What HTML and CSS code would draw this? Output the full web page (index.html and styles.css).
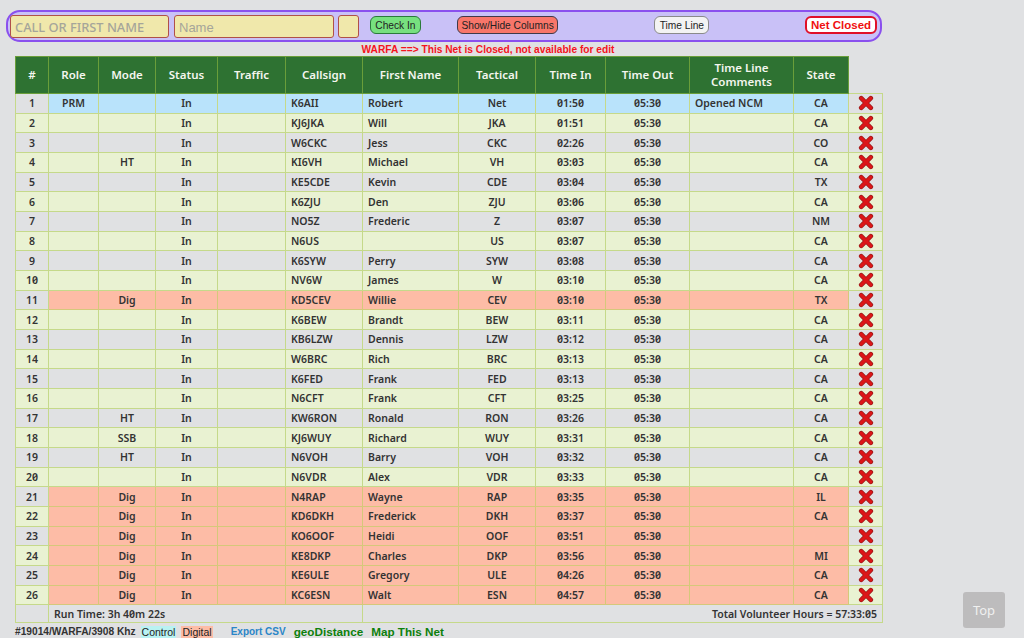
FILE: index.html
```html
<!DOCTYPE html>
<html lang="en">
<head>
    <meta charset="UTF-8">
    <title>Net Control</title>
    <link rel="stylesheet" href="styles.css">
</head>
<body>
    <svg class="defs" width="0" height="0">
        <symbol id="del" viewBox="0 0 16 16">
            <path d="M3.2 3.2L12.8 12.8M12.8 3.2L3.2 12.8" stroke="#9a1a1a" stroke-width="4.6" stroke-linecap="round" fill="none"/>
            <path d="M3.2 3.2L12.8 12.8M12.8 3.2L3.2 12.8" stroke="#dc1618" stroke-width="3.2" stroke-linecap="round" fill="none"/>
        </symbol>
    </svg>

    <div class="top-bar">
        <input class="field call" placeholder="CALL OR FIRST NAME">
        <input class="field name" placeholder="Name">
        <input class="field tiny">
        <button class="btn check">Check In</button>
        <button class="btn cols">Show/Hide Columns</button>
        <button class="btn line">Time Line</button>
        <button class="btn closed">Net Closed</button>
    </div>
    <p class="notice">WARFA ==&gt; This Net is Closed, not available for edit</p>

    <table class="net">
        <colgroup>
            <col class="c1"><col class="c2"><col class="c3"><col class="c4"><col class="c5"><col class="c6"><col class="c7">
            <col class="c8"><col class="c9"><col class="c10"><col class="c11"><col class="c12"><col class="c13">
        </colgroup>
        <thead>
            <tr>
                <th>#</th><th>Role</th><th>Mode</th><th>Status</th><th>Traffic</th><th>Callsign</th><th>First Name</th>
                <th>Tactical</th><th>Time In</th><th>Time Out</th><th>Time Line<br>Comments</th><th>State</th><th class="blank"></th>
            </tr>
        </thead>
        <tbody id="rows"></tbody>
        <tfoot>
            <tr>
                <td></td>
                <td colspan="5" class="left run">Run Time: 3h 40m 22s</td>
                <td colspan="7" class="right">Total Volunteer Hours = 57:33:05</td>
            </tr>
        </tfoot>
    </table>

    <div class="foot-line">
        <span class="net-id">#19014/WARFA/3908 Khz</span>
        <span class="key control">Control</span>
        <span class="key digital">Digital</span>
        <a class="export">Export CSV</a>
        <a class="geo">geoDistance</a>
        <a class="map">Map This Net</a>
    </div>

    <button class="top-btn">Top</button>

    <script>
        // role, mode, callsign, name, tactical, time in, comment, state
        const stations = [
            ['PRM', '', 'K6AII', 'Robert', 'Net', '01:50', 'Opened NCM', 'CA'],
            ['', '', 'KJ6JKA', 'Will', 'JKA', '01:51', '', 'CA'],
            ['', '', 'W6CKC', 'Jess', 'CKC', '02:26', '', 'CO'],
            ['', 'HT', 'KI6VH', 'Michael', 'VH', '03:03', '', 'CA'],
            ['', '', 'KE5CDE', 'Kevin', 'CDE', '03:04', '', 'TX'],
            ['', '', 'K6ZJU', 'Den', 'ZJU', '03:06', '', 'CA'],
            ['', '', 'NO5Z', 'Frederic', 'Z', '03:07', '', 'NM'],
            ['', '', 'N6US', '', 'US', '03:07', '', 'CA'],
            ['', '', 'K6SYW', 'Perry', 'SYW', '03:08', '', 'CA'],
            ['', '', 'NV6W', 'James', 'W', '03:10', '', 'CA'],
            ['', 'Dig', 'KD5CEV', 'Willie', 'CEV', '03:10', '', 'TX'],
            ['', '', 'K6BEW', 'Brandt', 'BEW', '03:11', '', 'CA'],
            ['', '', 'KB6LZW', 'Dennis', 'LZW', '03:12', '', 'CA'],
            ['', '', 'W6BRC', 'Rich', 'BRC', '03:13', '', 'CA'],
            ['', '', 'K6FED', 'Frank', 'FED', '03:13', '', 'CA'],
            ['', '', 'N6CFT', 'Frank', 'CFT', '03:25', '', 'CA'],
            ['', 'HT', 'KW6RON', 'Ronald', 'RON', '03:26', '', 'CA'],
            ['', 'SSB', 'KJ6WUY', 'Richard', 'WUY', '03:31', '', 'CA'],
            ['', 'HT', 'N6VOH', 'Barry', 'VOH', '03:32', '', 'CA'],
            ['', '', 'N6VDR', 'Alex', 'VDR', '03:33', '', 'CA'],
            ['', 'Dig', 'N4RAP', 'Wayne', 'RAP', '03:35', '', 'IL'],
            ['', 'Dig', 'KD6DKH', 'Frederick', 'DKH', '03:37', '', 'CA'],
            ['', 'Dig', 'KO6OOF', 'Heidi', 'OOF', '03:51', '', ''],
            ['', 'Dig', 'KE8DKP', 'Charles', 'DKP', '03:56', '', 'MI'],
            ['', 'Dig', 'KE6ULE', 'Gregory', 'ULE', '04:26', '', 'CA'],
            ['', 'Dig', 'KC6ESN', 'Walt', 'ESN', '04:57', '', 'CA']
        ];

        const rows = document.getElementById('rows');
        stations.forEach((s, i) => {
            const tr = document.createElement('tr');
            let kind = i % 2 ? 'even' : 'odd';
            if (s[0] === 'PRM') kind += ' prm';
            if (s[1] === 'Dig') kind += ' dig';
            tr.className = kind;
            tr.innerHTML =
                '<td class="num">' + (i + 1) + '</td>' +
                '<td>' + s[0] + '</td><td>' + s[1] + '</td><td>In</td><td></td>' +
                '<td class="left">' + s[2] + '</td><td class="left">' + s[3] + '</td>' +
                '<td>' + s[4] + '</td><td>' + s[5] + '</td><td>05:30</td>' +
                '<td class="left">' + s[6] + '</td><td>' + s[7] + '</td>' +
                '<td class="num"><svg class="del"><use href="#del"/></svg></td>';
            rows.appendChild(tr);
        });
    </script>
</body>
</html>
```
FILE: styles.css
```css
body {
    margin: 0;
    height: 638px;
    overflow: hidden;
    background: #e0e1e3;
    font-family: "Noto Sans", sans-serif;
    color: #333;
}

.defs {
    display: block;
    height: 0;
}

.top-bar {
    display: flex;
    align-items: flex-start;
    box-sizing: border-box;
    width: 876px;
    height: 32px;
    margin: 10px 0 0 6px;
    padding: 3px 3px 0 2px;
    background: #c9c1f7;
    border: 2px solid #8a50ee;
    border-radius: 14px;
}

.field {
    box-sizing: border-box;
    height: 23px;
    padding: 1px 4px 0;
    background: #f0e8ab;
    border: 1px solid #b0504a;
    border-radius: 3px;
    font-family: "Noto Sans", sans-serif;
}

.field::placeholder {
    color: #a5a59a;
    opacity: 1;
}

.call {
    width: 159px;
    margin-right: 5px;
    font-size: 12.8px;
    font-weight: 500;
}

.name {
    width: 160px;
    margin-right: 4px;
    font-family: "Liberation Sans", sans-serif;
    font-size: 13px;
}

.tiny {
    width: 21px;
}

.btn {
    height: 18px;
    margin-top: 1px;
    padding: 0;
    border-radius: 6px;
    font-family: "Liberation Sans", sans-serif;
    font-size: 10.2px;
    color: #222;
    white-space: nowrap;
}

.check {
    width: 51px;
    margin-left: 11px;
    background: #77e07f;
    border: 1px solid #2a7a3a;
}

.cols {
    width: 102px;
    margin-left: 36px;
    background: #f8766a;
    border: 1px solid #3f3a4a;
}

.line {
    width: 55px;
    margin-left: 96px;
    background: #f3f3f3;
    border: 1px solid #8a8a8a;
}

.closed {
    width: 72px;
    margin-left: 96px;
    background: #fff;
    border: 2px solid #e0102a;
    color: #f01010;
    font-weight: bold;
    font-size: 11.5px;
}

.notice {
    margin: 1px 0 0;
    width: 976px;
    height: 13px;
    text-align: center;
    font-family: "Liberation Sans", sans-serif;
    font-size: 10.2px;
    line-height: 13px;
    font-weight: bold;
    color: #f5141e;
}

.net {
    table-layout: fixed;
    width: 867px;
    margin-left: 15px;
    border-collapse: collapse;
    font-size: 10.5px;
    font-weight: 600;
    font-feature-settings: "zero";
}

.c1 { width: 33px; }
.c2 { width: 50px; }
.c3 { width: 57px; }
.c4 { width: 62px; }
.c5 { width: 68px; }
.c6 { width: 77px; }
.c7 { width: 96px; }
.c8 { width: 77px; }
.c9 { width: 70px; }
.c10 { width: 84px; }
.c11 { width: 104px; }
.c12 { width: 55px; }
.c13 { width: 34px; }

th {
    height: 36px;
    padding: 0;
    background: #2e7232;
    border: 1px solid #6a9e3a;
    color: #f4f6ee;
    font-size: 11.5px;
    line-height: 14px;
    font-weight: 600;
}

th.blank {
    background: transparent;
    border: none;
}

td {
    height: 18.68px;
    padding: 0;
    border: 1px solid #c5d98a;
    text-align: center;
    white-space: nowrap;
}

td.left {
    text-align: left;
    padding-left: 5px;
}

td.right {
    text-align: right;
    padding-right: 5px;
}

tr.odd td {
    background: #e0e1e3;
}

tr.even td {
    background: #e9f2d2;
}

tr.prm td {
    background: #b9e3fb;
}

tr.dig td {
    background: #fdbca6;
    border-color: #d5c87a;
}

tr td.num,
tr.prm td.num,
tr.dig td.num {
    border-color: #c5d98a;
}

tr.odd td.num {
    background: #e0e1e3;
}

tr.even td.num {
    background: #e9f2d2;
}

tfoot td {
    height: 17px;
    background: #e0e1e3;
    font-size: 10.5px;
}

.run {
    padding-left: 5px;
}

.del {
    display: block;
    width: 16px;
    height: 16px;
    margin: 0 auto;
}

.foot-line {
    display: flex;
    margin: 3px 0 0 15px;
    font-family: "Liberation Sans", sans-serif;
    font-size: 10.2px;
    font-weight: bold;
    line-height: 12px;
}

.net-id {
    color: #333;
    margin-right: 5px;
}

.key {
    padding: 0 1px;
    margin-right: 5px;
    font-weight: normal;
    font-size: 10.5px;
    color: #222;
}

.control {
    background: #b9f2f2;
}

.digital {
    background: #fdbca6;
}

.export {
    margin-left: 13px;
    color: #2a86c8;
    font-size: 10px;
}

.geo {
    margin-left: 8px;
    color: #0d800d;
    font-size: 11.7px;
}

.map {
    margin-left: 8px;
    color: #0d800d;
    font-size: 11.7px;
}

.top-btn {
    position: fixed;
    left: 963px;
    top: 592px;
    width: 42px;
    height: 36px;
    padding: 0;
    background: #bdbcbd;
    border: none;
    border-radius: 3px;
    color: #f0f0f0;
    font-family: "Noto Sans", sans-serif;
    font-size: 13px;
}
```
